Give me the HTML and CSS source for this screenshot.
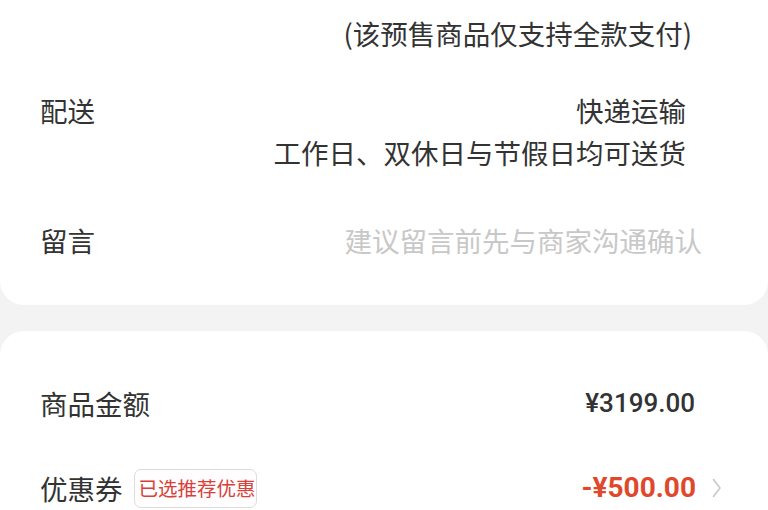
FILE: index.html
```html
<!DOCTYPE html>
<html lang="zh-CN">
<head>
<meta charset="utf-8">
<link rel="stylesheet" href="styles.css">
</head>
<body>
<div class="page">
  <section class="card card-top">
    <div class="note">(该预售商品仅支持全款支付)</div>
    <div class="row row-ship">
      <div class="label">配送</div>
      <div class="value">
        <div>快递运输</div>
        <div>工作日、双休日与节假日均可送货</div>
      </div>
    </div>
    <div class="row row-msg">
      <div class="label">留言</div>
      <div class="placeholder">建议留言前先与商家沟通确认</div>
    </div>
  </section>
  <section class="card card-bottom">
    <div class="row row-amount">
      <div class="label">商品金额</div>
      <div class="price">¥3199.00</div>
    </div>
    <div class="row row-coupon">
      <div class="label-group">
        <div class="label">优惠券</div>
        <div class="badge">已选推荐优惠</div>
      </div>
      <div class="coupon-right">
        <div class="discount">-¥500.00</div>
        <svg class="chevron" width="10" height="20" viewBox="0 0 10 20"><path d="M1.5 1.5 L8 10 L1.5 18.5" fill="none" stroke="#c9c9c9" stroke-width="1.6" stroke-linecap="round" stroke-linejoin="round"/></svg>
      </div>
    </div>
  </section>
</div>
</body>
</html>
```
FILE: styles.css
```css
* { box-sizing: border-box; }
html, body { margin: 0; padding: 0; }
body {
  background: #f3f3f3;
  font-family: "Noto Sans CJK SC", "Noto Sans", sans-serif;
  color: #333;
  width: 768px;
  height: 510px;
  overflow: hidden;
}
.page {
  display: flex;
  flex-direction: column;
  gap: 26px;
}
.card {
  background: #fff;
}
.card-top {
  height: 305px;
  border-radius: 0 0 24px 24px;
  padding: 13px 82px 0 40px;
}
.card-bottom {
  border-radius: 24px 24px 0 0;
  padding: 51px 46px 0 40px;
  height: 179px;
}
.note {
  font-size: 27.5px;
  line-height: 40px;
  text-align: right;
  margin-right: -6px;
  color: #333;
}
.row {
  display: flex;
  justify-content: space-between;
  align-items: flex-start;
  font-size: 27.5px;
  line-height: 42px;
}
.row-ship { margin-top: 36px; }
.value { text-align: right; }
.row-msg { margin-top: 46px; }
.placeholder {
  color: #c8c8c8;
  margin-right: -16px;
}
.row-amount .price {
  font-family: Roboto, "Noto Sans", sans-serif;
  font-size: 26px;
  font-weight: 500;
  color: #333;
  margin-right: 27px;
}
.row-coupon {
  margin-top: 43px;
  align-items: center;
}
.label-group {
  display: flex;
  align-items: center;
  gap: 11px;
}
.badge {
  border: 1.5px solid #dcdcdc;
  border-radius: 7px;
  color: #d8413a;
  font-size: 19.5px;
  line-height: 36px;
  height: 39px;
  padding: 0 4px;
  background: #fffdfd;
  width: 123px;
  text-align: center;
  white-space: nowrap;
}
.coupon-right {
  display: flex;
  align-items: center;
  gap: 16px;
}
.discount {
  font-family: Roboto, "Noto Sans", sans-serif;
  font-size: 28px;
  font-weight: 700;
  color: #e0482c;
}
.chevron { display: block; }
```
